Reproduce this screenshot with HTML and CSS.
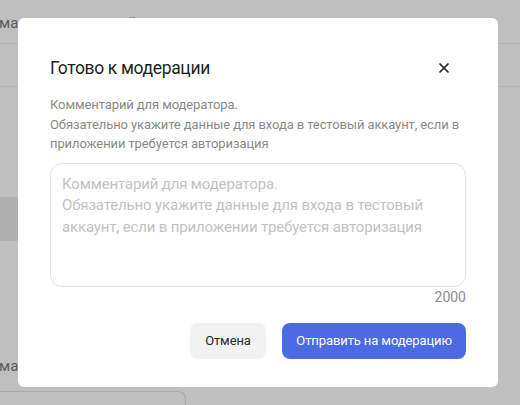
FILE: index.html
```html
<!DOCTYPE html>
<html lang="ru">
<head>
<meta charset="utf-8">
<title>Готово к модерации</title>
<link rel="stylesheet" href="styles.css">
</head>
<body>
<div class="page">
  <div class="row row-top"><span class="lbl">магазин</span><span class="lbl-y">й</span></div>
  <div class="row row-line"></div>
  <div class="row row-line2"></div>
  <div class="band"></div>
  <div class="row row-bottom"><span class="lbl">магазин</span></div>
  <div class="field"></div>
</div>
<div class="overlay">
  <div class="modal">
    <div class="head">
      <h2 class="title">Готово к модерации</h2>
      <button class="close" aria-label="Закрыть">
        <svg width="12" height="12" viewBox="0 0 12 12"><path d="M1.5 1.5 L10.5 10.5 M10.5 1.5 L1.5 10.5" stroke="#222" stroke-width="1.7" fill="none"/></svg>
      </button>
    </div>
    <p class="desc">Комментарий для модератора.<br>Обязательно укажите данные для входа в тестовый аккаунт, если в приложении требуется авторизация</p>
    <div class="area">Комментарий для модератора.<br>Обязательно укажите данные для входа в тестовый аккаунт, если в приложении требуется авторизация</div>
    <div class="counter">2000</div>
    <div class="actions">
      <button class="btn btn-cancel">Отмена</button>
      <button class="btn btn-primary">Отправить на модерацию</button>
    </div>
  </div>
</div>
</body>
</html>
```
FILE: styles.css
```css
html, body {
  margin: 0;
  padding: 0;
}
body {
  width: 520px;
  height: 405px;
  overflow: hidden;
  background: #bfbfbf;
  font-family: Roboto, "Noto Sans", sans-serif;
  position: relative;
}
.page {
  display: flex;
  flex-direction: column;
}
.row-top {
  height: 43px;
  border-bottom: 1px solid #b2b2b2;
  position: relative;
}
.lbl {
  display: block;
  font-size: 15px;
  line-height: 18px;
  color: #5c5c5c;
  padding-top: 14px;
  margin-left: -1px;
}
.lbl-y {
  position: absolute;
  left: 128px;
  top: 14px;
  font-size: 15px;
  line-height: 18px;
  color: #5c5c5c;
}
.row-line {
  height: 42px;
  border-bottom: 1px solid #b2b2b2;
}
.row-line2 {
  height: 110px;
}
.band {
  height: 44px;
  background: #b0b0b0;
  width: 18px;
}
.row-bottom {
  height: 150px;
}
.row-bottom .lbl {
  padding-top: 116px;
}
.field {
  box-sizing: border-box;
  width: 196px;
  height: 14px;
  border: 1px solid #aaaaaa;
  border-bottom: 0;
  border-radius: 8px 8px 0 0;
  margin-left: -10px;
}
.overlay {
  position: absolute;
  left: 18px;
  top: 18px;
}
.modal {
  box-sizing: border-box;
  width: 480px;
  height: 369px;
  padding: 38px 32px 28px 32px;
  background: #fff;
  border-radius: 6px;
  display: flex;
  flex-direction: column;
}
.head {
  display: flex;
  align-items: center;
  justify-content: space-between;
  height: 24px;
}
.title {
  margin: 0;
  font-size: 17.5px;
  font-weight: 400;
  letter-spacing: -0.35px;
  color: #1f1f1f;
  line-height: 24px;
}
.close {
  border: 0;
  background: none;
  padding: 0;
  width: 12px;
  height: 12px;
  margin-right: 16px;
  display: flex;
}
.desc {
  margin: 15px 0 0 0;
  font-size: 13px;
  line-height: 19.5px;
  letter-spacing: -0.1px;
  color: #8a8a8a;
}
.area {
  margin-top: 9px;
  height: 100px;
  border: 1px solid #e3e3e3;
  border-radius: 12px;
  padding: 10px 11px 12px 11px;
  font-size: 15px;
  line-height: 21.5px;
  letter-spacing: -0.15px;
  color: #c2c2c2;
}
.counter {
  text-align: right;
  font-size: 14px;
  color: #8c8c8c;
  line-height: 18px;
  margin-top: 1px;
}
.actions {
  display: flex;
  justify-content: flex-end;
  gap: 16px;
  margin-top: 17px;
}
.btn {
  height: 36px;
  border: 0;
  border-radius: 8px;
  font-family: inherit;
  font-size: 13px;
  letter-spacing: -0.1px;
  padding: 0 15.5px;
}
.btn-cancel {
  background: #f2f2f2;
  color: #2a2a2a;
}
.btn-primary {
  background: #4b6ae3;
  color: #fff;
  padding: 0 14px;
}
```
